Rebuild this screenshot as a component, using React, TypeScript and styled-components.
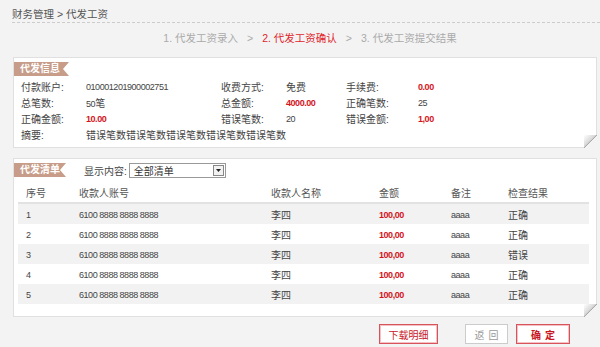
import styled, { createGlobalStyle } from "styled-components";

const GlobalStyle = createGlobalStyle`
  body {
    margin: 0;
    background: #f3f3f3;
    font-family: "Liberation Sans", "Noto Sans CJK SC", sans-serif;
    font-size: 10px;
    color: #444;
  }
`;

const Page = styled.div`
  padding: 0 3px 0 13px;
  width: 584px;
`;

const Breadcrumb = styled.div`
  height: 23px;
  line-height: 28px;
  margin-left: -1px;
  color: #555;
  font-size: 10.5px;
  border-bottom: 1px dashed #ccc;
  box-sizing: border-box;
  margin-right: -3px;
`;

const Steps = styled.div`
  display: flex;
  justify-content: center;
  gap: 9px;
  height: 34px;
  line-height: 30px;
  padding-left: 10px;
  color: #aaa;
  font-size: 10.5px;
`;

const Step = styled.span<{ $active?: boolean }>`
  color: ${(p) => (p.$active ? "#e0262c" : "#aaa")};
`;

// latin text in the source is a narrow face; squeeze Liberation Sans a little
const Num = styled.span`
  font-size: 9px;
  letter-spacing: -0.45px;
`;

const Panel = styled.div`
  position: relative;
  background: #fff;
  border: 1px solid #e0e0e0;
  box-sizing: border-box;
  padding: 4px 7px 5px 0;
  margin-bottom: 10px;

  &::after {
    content: "";
    position: absolute;
    right: -1px;
    bottom: -1px;
    width: 13px;
    height: 13px;
    background: linear-gradient(135deg, #ffffff 0%, #d8d8d8 45%, #aaa 50%, #f3f3f3 52%);
  }
`;

const Tag = styled.div<{ $w: number }>`
  width: ${(p) => p.$w}px;
  height: 14px;
  line-height: 14px;
  padding-left: 6px;
  box-sizing: border-box;
  background: #c79c88;
  color: #fff;
  font-weight: bold;
  font-size: 10px;
  clip-path: polygon(0 0, 100% 0, calc(100% - 6px) 50%, 100% 100%, 0 100%);
`;

const InfoGrid = styled.div`
  display: grid;
  grid-template-columns: 65px 135px 65px 60px 72px auto;
  grid-auto-rows: 16px;
  align-items: center;
  padding: 2px 0 0 7px;
`;

const Label = styled.span`
  color: #444;
`;

const Value = styled.span<{ $red?: boolean; $span?: number }>`
  color: ${(p) => (p.$red ? "#d4141c" : "#444")};
  font-weight: ${(p) => (p.$red ? "bold" : "normal")};
  grid-column: ${(p) => (p.$span ? `span ${p.$span}` : "auto")};
`;

const ListHead = styled.div`
  display: flex;
  align-items: center;
  height: 14px;
`;

const Filter = styled.div`
  display: flex;
  align-items: center;
  margin-left: 18px;
  gap: 2px;
`;

const SelectBox = styled.div`
  display: flex;
  align-items: center;
  justify-content: space-between;
  width: 97px;
  height: 15px;
  border: 1px solid #999;
  box-sizing: border-box;
  background: #fff;
  padding: 0 1px 0 4px;
  font-size: 10px;
  color: #333;
`;

const Arrow = styled.span`
  display: flex;
  align-items: center;
  justify-content: center;
  width: 11px;
  height: 11px;
  border: 1px solid #888;
  box-sizing: border-box;
  background: #f2f2f2;
`;

const Table = styled.div`
  margin: 5px 0 7px 4px;
`;

const Row = styled.div<{ $head?: boolean; $odd?: boolean }>`
  display: grid;
  grid-template-columns: 53px 192px 108px 72px 57px auto;
  height: 20px;
  align-items: center;
  background: ${(p) => (p.$odd ? "#f2f2f2" : "#fff")};
  border-bottom: ${(p) => (p.$head ? "2px solid #e2e2e2" : "none")};
  color: ${(p) => (p.$head ? "#555" : "#444")};
  font-size: 10px;
`;

const Cell = styled.span<{ $red?: boolean }>`
  padding-left: 8px;
  color: ${(p) => (p.$red ? "#d4141c" : "inherit")};
  font-weight: ${(p) => (p.$red ? "bold" : "normal")};
`;

const Buttons = styled.div`
  display: flex;
  justify-content: flex-end;
  align-items: center;
  padding: 0 27px 0 0;
  margin-top: -3px;
`;

const Button = styled.button<{ $kind: "red" | "gray" | "primary"; $w: number }>`
  width: ${(p) => p.$w}px;
  height: 20px;
  padding: 0;
  background: #fff;
  font-family: inherit;
  font-size: 10px;
  border: 1px solid ${(p) => (p.$kind === "gray" ? "#ccc" : "#d9535b")};
  box-shadow: ${(p) => (p.$kind === "gray" ? "none" : "inset 0 0 0 1px #f3c0c3")};
  color: ${(p) => (p.$kind === "gray" ? "#999" : "#c8161e")};
  font-weight: ${(p) => (p.$kind === "primary" ? "bold" : "normal")};
  letter-spacing: ${(p) => (p.$kind === "red" ? "0" : "4px")};
  text-indent: ${(p) => (p.$kind === "red" ? "0" : "4px")};
  margin-left: ${(p) => (p.$kind === "gray" ? "27px" : p.$kind === "primary" ? "8px" : "0")};
`;

const rows = [
  { n: 1, ok: "正确" },
  { n: 2, ok: "正确" },
  { n: 3, ok: "错误" },
  { n: 4, ok: "正确" },
  { n: 5, ok: "正确" },
];

export default function App() {
  return (
    <>
      <GlobalStyle />
      <Page>
        <Breadcrumb>财务管理 &gt; 代发工资</Breadcrumb>
        <Steps>
          <Step>1. 代发工资录入</Step>
          <Step>&gt;</Step>
          <Step $active>2. 代发工资确认</Step>
          <Step>&gt;</Step>
          <Step>3. 代发工资提交结果</Step>
        </Steps>

        <Panel>
          <Tag $w={55}>代发信息</Tag>
          <InfoGrid>
            <Label>付款账户:</Label>
            <Value><Num>010001201900002751</Num></Value>
            <Label>收费方式:</Label>
            <Value>免费</Value>
            <Label>手续费:</Label>
            <Value $red><Num>0.00</Num></Value>

            <Label>总笔数:</Label>
            <Value><Num>50</Num>笔</Value>
            <Label>总金额:</Label>
            <Value $red><Num>4000.00</Num></Value>
            <Label>正确笔数:</Label>
            <Value><Num>25</Num></Value>

            <Label>正确金额:</Label>
            <Value $red><Num>10.00</Num></Value>
            <Label>错误笔数:</Label>
            <Value><Num>20</Num></Value>
            <Label>错误金额:</Label>
            <Value $red><Num>1,00</Num></Value>

            <Label>摘要:</Label>
            <Value $span={5}>错误笔数错误笔数错误笔数错误笔数错误笔数</Value>
          </InfoGrid>
        </Panel>

        <Panel>
          <ListHead>
            <Tag $w={52}>代发清单</Tag>
            <Filter>
              <span>显示内容:</span>
              <SelectBox>
                全部清单
                <Arrow>
                  <svg width="5" height="3" viewBox="0 0 5 3">
                    <polygon points="0,0 5,0 2.5,3" fill="#222" />
                  </svg>
                </Arrow>
              </SelectBox>
            </Filter>
          </ListHead>
          <Table>
            <Row $head>
              <Cell>序号</Cell>
              <Cell>收款人账号</Cell>
              <Cell>收款人名称</Cell>
              <Cell>金额</Cell>
              <Cell>备注</Cell>
              <Cell>检查结果</Cell>
            </Row>
            {rows.map((r) => (
              <Row key={r.n} $odd={r.n % 2 === 1}>
                <Cell><Num>{r.n}</Num></Cell>
                <Cell><Num>6100 8888 8888 8888</Num></Cell>
                <Cell>李四</Cell>
                <Cell $red><Num>100,00</Num></Cell>
                <Cell><Num>aaaa</Num></Cell>
                <Cell>{r.ok}</Cell>
              </Row>
            ))}
          </Table>
        </Panel>

        <Buttons>
          <Button $kind="red" $w={59}>下载明细</Button>
          <Button $kind="gray" $w={43}>返回</Button>
          <Button $kind="primary" $w={54}>确定</Button>
        </Buttons>
      </Page>
    </>
  );
}
